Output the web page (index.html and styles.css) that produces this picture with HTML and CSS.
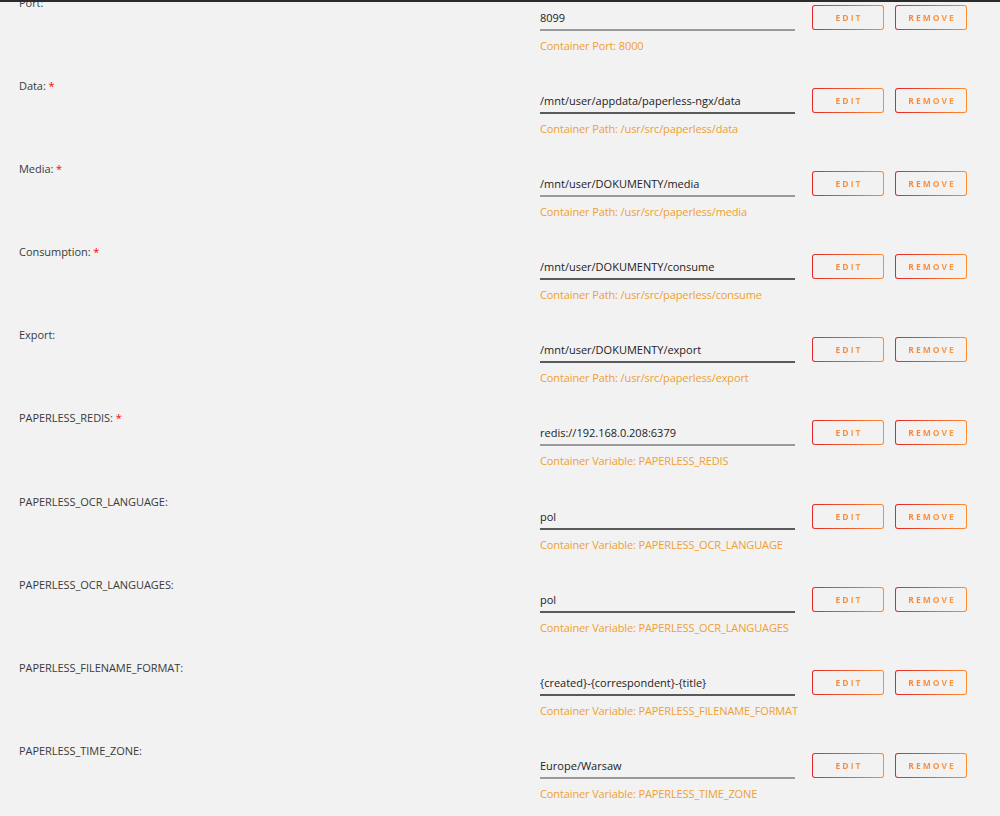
FILE: index.html
```html
<!DOCTYPE html>
<html>
<head>
<meta charset="utf-8">
<link rel="stylesheet" href="styles.css">
</head>
<body>
<div class="topline"></div>
<div class="list">
  <div class="row">
    <div class="label">Port:</div>
    <div class="field">
      <div class="line">
        <div class="input light">8099</div>
        <button class="btn"><span>EDIT</span></button>
        <button class="btn"><span>REMOVE</span></button>
      </div>
      <div class="note">Container Port: 8000</div>
    </div>
  </div>
  <div class="row">
    <div class="label">Data: <span class="req">*</span></div>
    <div class="field">
      <div class="line">
        <div class="input">/mnt/user/appdata/paperless-ngx/data</div>
        <button class="btn"><span>EDIT</span></button>
        <button class="btn"><span>REMOVE</span></button>
      </div>
      <div class="note">Container Path: /usr/src/paperless/data</div>
    </div>
  </div>
  <div class="row">
    <div class="label">Media: <span class="req">*</span></div>
    <div class="field">
      <div class="line">
        <div class="input light">/mnt/user/DOKUMENTY/media</div>
        <button class="btn"><span>EDIT</span></button>
        <button class="btn"><span>REMOVE</span></button>
      </div>
      <div class="note">Container Path: /usr/src/paperless/media</div>
    </div>
  </div>
  <div class="row">
    <div class="label">Consumption: <span class="req">*</span></div>
    <div class="field">
      <div class="line">
        <div class="input">/mnt/user/DOKUMENTY/consume</div>
        <button class="btn"><span>EDIT</span></button>
        <button class="btn"><span>REMOVE</span></button>
      </div>
      <div class="note">Container Path: /usr/src/paperless/consume</div>
    </div>
  </div>
  <div class="row">
    <div class="label">Export:</div>
    <div class="field">
      <div class="line">
        <div class="input">/mnt/user/DOKUMENTY/export</div>
        <button class="btn"><span>EDIT</span></button>
        <button class="btn"><span>REMOVE</span></button>
      </div>
      <div class="note">Container Path: /usr/src/paperless/export</div>
    </div>
  </div>
  <div class="row">
    <div class="label">PAPERLESS_REDIS: <span class="req">*</span></div>
    <div class="field">
      <div class="line">
        <div class="input light">redis://192.168.0.208:6379</div>
        <button class="btn"><span>EDIT</span></button>
        <button class="btn"><span>REMOVE</span></button>
      </div>
      <div class="note">Container Variable: PAPERLESS_REDIS</div>
    </div>
  </div>
  <div class="row">
    <div class="label">PAPERLESS_OCR_LANGUAGE:</div>
    <div class="field">
      <div class="line">
        <div class="input">pol</div>
        <button class="btn"><span>EDIT</span></button>
        <button class="btn"><span>REMOVE</span></button>
      </div>
      <div class="note">Container Variable: PAPERLESS_OCR_LANGUAGE</div>
    </div>
  </div>
  <div class="row">
    <div class="label">PAPERLESS_OCR_LANGUAGES:</div>
    <div class="field">
      <div class="line">
        <div class="input">pol</div>
        <button class="btn"><span>EDIT</span></button>
        <button class="btn"><span>REMOVE</span></button>
      </div>
      <div class="note">Container Variable: PAPERLESS_OCR_LANGUAGES</div>
    </div>
  </div>
  <div class="row">
    <div class="label">PAPERLESS_FILENAME_FORMAT:</div>
    <div class="field">
      <div class="line">
        <div class="input">{created}-{correspondent}-{title}</div>
        <button class="btn"><span>EDIT</span></button>
        <button class="btn"><span>REMOVE</span></button>
      </div>
      <div class="note">Container Variable: PAPERLESS_FILENAME_FORMAT</div>
    </div>
  </div>
  <div class="row">
    <div class="label">PAPERLESS_TIME_ZONE:</div>
    <div class="field">
      <div class="line">
        <div class="input light">Europe/Warsaw</div>
        <button class="btn"><span>EDIT</span></button>
        <button class="btn"><span>REMOVE</span></button>
      </div>
      <div class="note">Container Variable: PAPERLESS_TIME_ZONE</div>
    </div>
  </div>
</div>
</body>
</html>
```

FILE: styles.css
```css
html, body {
  margin: 0;
  padding: 0;
  background: #f2f2f2;
  overflow: hidden;
}
body {
  font-family: "Open Sans", "Noto Sans", sans-serif;
  font-size: 11px;
  color: #333;
  height: 816px;
  position: relative;
}
.topline {
  position: absolute;
  left: 0;
  top: 0;
  width: 100%;
  height: 2px;
  background: #2b2b2b;
  z-index: 2;
}
.list {
  margin-top: -4px;
  padding-left: 19px;
}
.row {
  display: grid;
  grid-template-columns: 521px 1fr;
  height: 83.1px;
}
.label {
  line-height: 14px;
  height: 14px;
  color: #3a3a3a;
  letter-spacing: -0.05px;
}
.req {
  color: #f00;
}
.field {
  padding-top: 10px;
}
.line {
  display: flex;
  align-items: flex-start;
}
.input {
  width: 255px;
  height: 23px;
  line-height: 23px;
  border-bottom: 2px solid #5a5a5a;
  color: #222;
  box-sizing: content-box;
  margin-right: 17px;
}
.input.light {
  border-bottom-color: #9a9a9a;
}
.btn {
  width: 72px;
  height: 25px;
  padding: 0;
  margin: -1px 11px 0 0;
  border: 1px solid transparent;
  border-radius: 3px;
  background:
    linear-gradient(#f2f2f2, #f2f2f2) padding-box,
    linear-gradient(90deg, #e22828, #ff8c2f) border-box;
  font-family: "Open Sans", "Noto Sans", sans-serif;
  font-size: 8.5px;
  font-weight: 700;
  letter-spacing: 2px;
  color: #f7903a;
  cursor: pointer;
  display: flex;
  align-items: center;
  justify-content: center;
}
.btn span {
  padding-left: 2px;
  background: linear-gradient(90deg, #f7823a, #ff9a3c);
  -webkit-background-clip: text;
  background-clip: text;
  color: transparent;
}
.note {
  margin-top: 8px;
  line-height: 14px;
  color: #f0a030;
  letter-spacing: -0.12px;
}
```
